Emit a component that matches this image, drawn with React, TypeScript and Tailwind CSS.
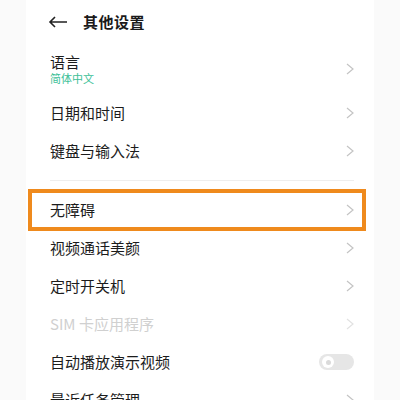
const font = { fontFamily: '"Noto Sans CJK SC", "Noto Sans", sans-serif' }

function Chevron({ light }: { light?: boolean }) {
  return (
    <svg width="8" height="12" viewBox="0 0 8 12" className="shrink-0">
      <path d="M1 1 L7 6 L1 11" fill="none" stroke={light ? "#e2e2e2" : "#c4c4c4"} strokeWidth="1.2" />
    </svg>
  )
}

function Row({ label, muted, right }: { label: string; muted?: boolean; right?: React.ReactNode }) {
  return (
    <div className="flex h-[38px] items-center justify-between pl-6 pr-5">
      <span className={`text-[15px] leading-[18px] ${muted ? "text-[#d0d0d0]" : "text-[#1c1c1c]"}`}>{label}</span>
      {right ?? <Chevron light={muted} />}
    </div>
  )
}

export default function App() {
  return (
    <div className="h-[400px] w-[400px] overflow-hidden bg-[#fafafa]" style={font}>
      <div className="mx-[26px] h-full bg-white">
        {/* header */}
        <div className="flex h-[44px] items-center pl-[22px]">
          <svg width="20" height="12" viewBox="0 0 20 12">
            <path d="M19 6 H2 M7 1 L2 6 L7 11" fill="none" stroke="#222" strokeWidth="1.6" />
          </svg>
          <span className="ml-[15px] text-[15px] font-bold tracking-[0.5px] text-[#1a1a1a]">其他设置</span>
        </div>

        <div className="flex h-[50px] items-center justify-between pl-6 pr-5">
          <div className="flex flex-col">
            <span className="text-[15px] leading-[16px] text-[#1c1c1c]">语言</span>
            <span className="mt-[2px] text-[11px] leading-[12px] text-[#3dbf98]">简体中文</span>
          </div>
          <Chevron />
        </div>
        <Row label="日期和时间" />
        <Row label="键盘与输入法" />

        <div className="mt-[10px] mb-[10px] ml-6 mr-5 h-px bg-[#eeeeee]" />

        <div className="relative">
          <Row label="无障碍" />
          <div className="absolute -top-[2px] -bottom-[2px] left-[2px] right-[8px] border-4 border-[#ef8a1d]" />
        </div>
        <Row label="视频通话美颜" />
        <Row label="定时开关机" />
        <Row label="SIM 卡应用程序" muted />
        <Row
          label="自动播放演示视频"
          right={
            <div className="flex h-[16px] w-[35px] items-center rounded-full bg-[#e6e6e6] pl-[3px]">
              <div className="flex h-[12px] w-[12px] items-center justify-center rounded-full bg-white">
                <div className="h-[5px] w-[5px] rounded-full bg-[#dadada]" />
              </div>
            </div>
          }
        />
        <Row label="最近任务管理" />
      </div>
    </div>
  )
}
